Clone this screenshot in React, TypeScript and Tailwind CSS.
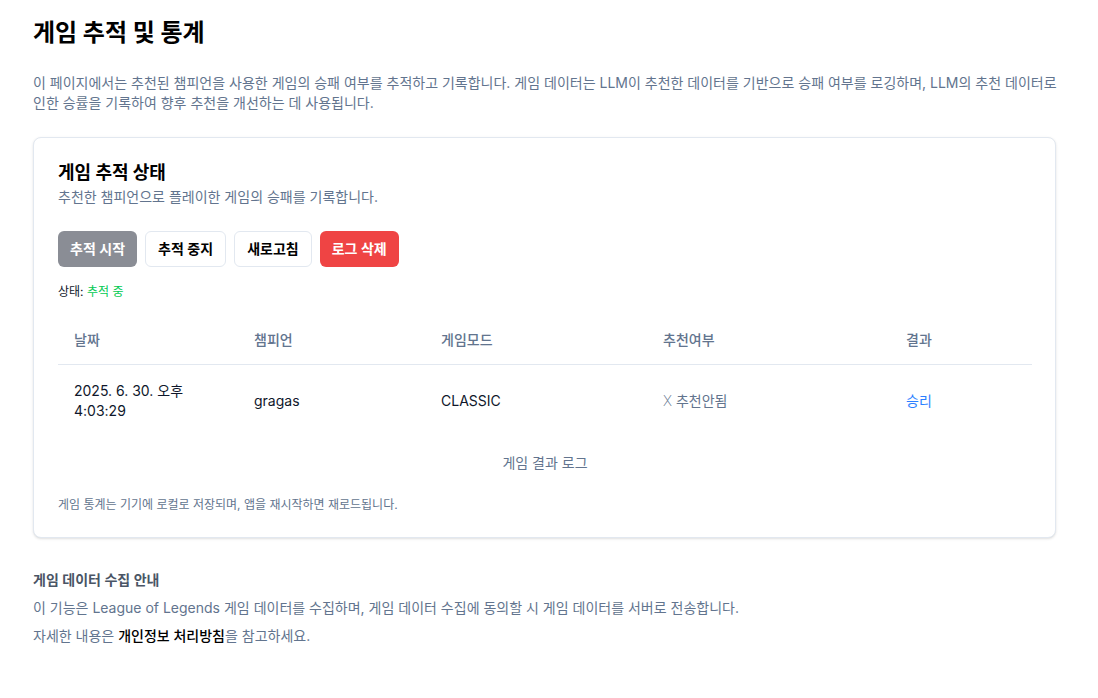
const games = [
  {
    date: "2025. 6. 30. 오후 4:03:29",
    champion: "gragas",
    mode: "CLASSIC",
    recommended: false,
    result: "승리",
  },
];

export default function App() {
  return (
    <div
      className="min-h-screen bg-white pl-[33px] pr-8 pt-[17px] pb-10 text-slate-900"
      style={{ fontFamily: 'Inter, "Noto Sans CJK KR", sans-serif' }}
    >
      <div className="max-w-[1023px]">
        <h1 className="text-2xl font-bold leading-8 text-black">게임 추적 및 통계</h1>
        <p className="mt-6 w-[1040px] text-sm leading-5 text-slate-500">
          이 페이지에서는 추천된 챔피언을 사용한 게임의 승패 여부를 추적하고 기록합니다. 게임 데이터는 LLM이
          추천한 데이터를 기반으로 승패 여부를 로깅하며, LLM의 추천 데이터로 인한 승률을 기록하여 향후 추천을
          개선하는 데 사용됩니다.
        </p>

        <div className="mt-6 rounded-lg border border-slate-200 bg-white px-6 pt-[21px] pb-6 shadow-sm">
          <h2 className="text-lg font-bold leading-7 text-black">게임 추적 상태</h2>
          <p className="text-sm leading-5 text-slate-500">추천한 챔피언으로 플레이한 게임의 승패를 기록합니다.</p>

          <div className="mt-6 flex gap-2">
            <button className="h-9 rounded-md bg-[#8a8d95] px-3 text-sm font-semibold text-white">추적 시작</button>
            <button className="h-9 rounded-md border border-slate-200 bg-white px-3 text-sm font-semibold text-black">
              추적 중지
            </button>
            <button className="h-9 rounded-md border border-slate-200 bg-white px-3 text-sm font-semibold text-black">
              새로고침
            </button>
            <button className="h-9 rounded-md bg-[#ef4444] px-3 text-sm font-semibold text-white">로그 삭제</button>
          </div>

          <p className="mt-[17px] text-xs leading-4 text-slate-900">
            상태: <span className="text-green-500">추적 중</span>
          </p>

          <table className="mt-4 w-full table-fixed caption-bottom text-sm">
            <caption className="mt-4 text-sm leading-5 text-slate-500">게임 결과 로그</caption>
            <colgroup>
              <col className="w-[180px]" />
              <col className="w-[187px]" />
              <col className="w-[222px]" />
              <col className="w-[243px]" />
              <col className="w-[142px]" />
            </colgroup>
            <thead>
              <tr className="border-b border-slate-200">
                <th className="h-12 px-4 text-left font-medium text-slate-500">날짜</th>
                <th className="h-12 px-4 text-left font-medium text-slate-500">챔피언</th>
                <th className="h-12 px-4 text-left font-medium text-slate-500">게임모드</th>
                <th className="h-12 px-4 text-left font-medium text-slate-500">추천여부</th>
                <th className="h-12 px-4 text-left font-medium text-slate-500">결과</th>
              </tr>
            </thead>
            <tbody>
              {games.map((g) => (
                <tr key={g.date}>
                  <td className="p-4 leading-5 text-slate-900">{g.date}</td>
                  <td className="p-4 leading-5 text-slate-900">{g.champion}</td>
                  <td className="p-4 leading-5 text-slate-900">{g.mode}</td>
                  <td className="p-4 leading-5 text-slate-500">
                    <span className="font-extralight">{g.recommended ? "✓" : "X"}</span>{" "}
                    {g.recommended ? "추천됨" : "추천안됨"}
                  </td>
                  <td className="p-4 leading-5 text-blue-500">{g.result}</td>
                </tr>
              ))}
            </tbody>
          </table>

          <p className="mt-6 text-xs leading-4 text-slate-500">
            게임 통계는 기기에 로컬로 저장되며, 앱을 재시작하면 재로드됩니다.
          </p>
        </div>

        <div className="mt-8 space-y-2 text-sm leading-5">
          <h3 className="font-semibold text-gray-600">게임 데이터 수집 안내</h3>
          <p className="text-slate-500">
            이 기능은 League of Legends 게임 데이터를 수집하며, 게임 데이터 수집에 동의할 시 게임 데이터를 서버로
            전송합니다.
          </p>
          <p className="text-slate-500">
            자세한 내용은 <span className="font-medium text-black">개인정보 처리방침</span>을 참고하세요.
          </p>
        </div>
      </div>
    </div>
  );
}
